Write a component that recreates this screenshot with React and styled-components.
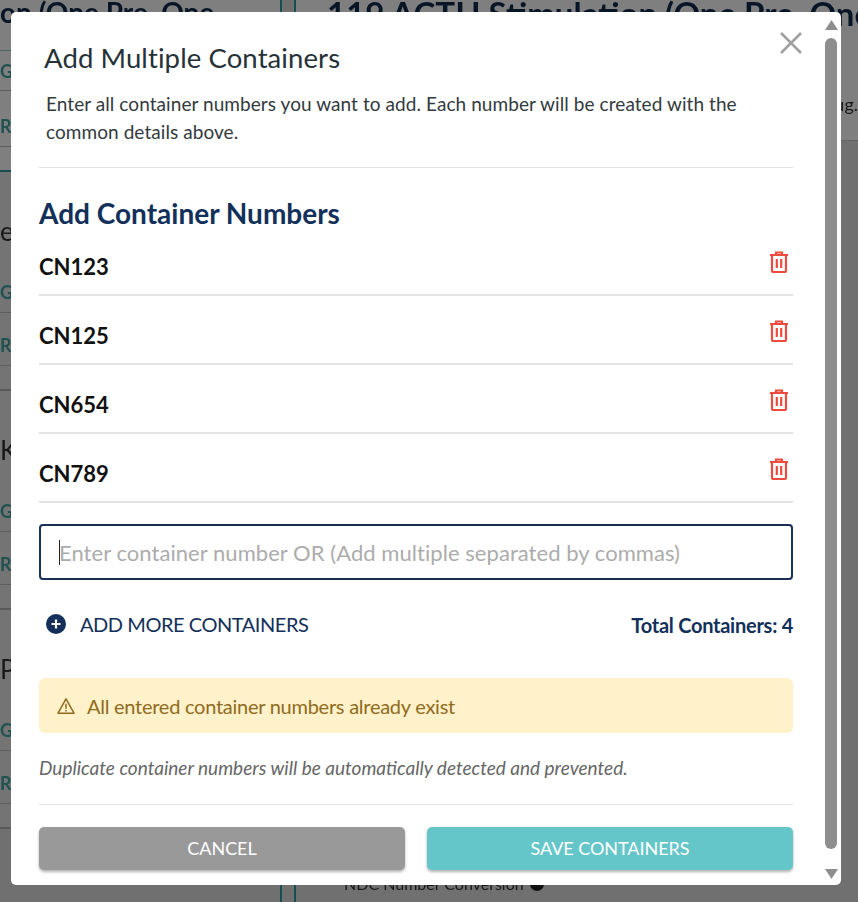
import styled, { createGlobalStyle } from "styled-components";

const containers = ["CN123", "CN125", "CN654", "CN789"];

const GlobalStyle = createGlobalStyle`
    html, body {
        margin: 0;
        padding: 0;
        background: #6f6f6f;
    }
    * {
        box-sizing: border-box;
    }
`;

const Page = styled.div`
    position: relative;
    width: 858px;
    height: 902px;
    overflow: hidden;
    font-family: Lato, "Open Sans", sans-serif;
`;

/* the page behind the dialog, only its edges show */
const Underlay = styled.div`
    position: absolute;
    inset: 0;
    display: flex;
    background: #e0e0e0;
    filter: blur(0.7px);
`;

const LeftColumn = styled.div`
    width: 282px;
    flex: none;
    display: flex;
    flex-direction: column;
    border-right: 2px solid #2f9c9c;
`;

const RightColumn = styled.div`
    flex: 1;
    min-width: 0;
    margin-left: 12px;
    display: flex;
    flex-direction: column;
    border-left: 2px solid #2f9c9c;
`;

const LeftHeading = styled.div`
    height: 50px;
    background: #fff;
    color: #0f2b4c;
    font-size: 28px;
    font-weight: 700;
    line-height: 24px;
    white-space: nowrap;
    overflow: hidden;
`;

const Section = styled.div`
    height: ${(p) => (p.$first ? "122px" : "219px")};
    flex: none;
    border-bottom: 2px solid ${(p) => (p.$first ? "#2f9c9c" : "#b5b5b5")};
    background: ${(p) => (p.$first ? "#fff" : "#e8e8e8")};
`;

const SectionLabel = styled.div`
    height: 100px;
    padding-top: 44px;
    font-size: 26px;
    line-height: 30px;
    color: #333;
`;

const LabelMark = styled.span`
    color: #2c4a86;
`;

const ChoiceRow = styled.div`
    height: 41px;
    margin-bottom: ${(p) => p.$gap}px;
    border-bottom: 1px solid #bcbcbc;
    border-top: ${(p) => (p.$top ? "1px solid #9ccaca" : "none")};
    color: #3fa5a0;
    font-size: 18px;
    font-weight: 700;
    line-height: 41px;
`;

const RightHeading = styled.div`
    height: 92px;
    padding-left: 31px;
    background: #fff;
    color: #0f2b4c;
    font-size: 33px;
    font-weight: 700;
    line-height: 26px;
    white-space: nowrap;
    overflow: hidden;
`;

const RightLine = styled.div`
    height: 49px;
    background: #fff;
    border-bottom: 1px solid #c8c8c8;
    color: #333;
    font-size: 18px;
    line-height: 24px;
    text-align: right;
`;

const RightFooter = styled.div`
    margin-top: auto;
    padding: 0 0 10px 48px;
    display: flex;
    align-items: center;
    gap: 6px;
    color: #333;
    font-size: 16px;
    line-height: 16px;
`;

const InfoDot = styled.span`
    width: 14px;
    height: 14px;
    border-radius: 50%;
    background: #222;
`;

const Backdrop = styled.div`
    position: absolute;
    inset: 0;
    padding: 12px 17px 17px 11px;
    background: rgba(0, 0, 0, 0.5);
`;

const Modal = styled.div`
    position: relative;
    width: 830px;
    height: 873px;
    display: flex;
    background: #fff;
    border-radius: 5px;
    overflow: hidden;
`;

const Content = styled.div`
    flex: 1;
    min-width: 0;
    padding: 0 32px 0 28px;
    display: flex;
    flex-direction: column;
`;

const CloseButton = styled.button`
    position: absolute;
    top: 20px;
    left: 768px;
    width: 24px;
    height: 22px;
    padding: 0;
    border: none;
    background: none;
    display: block;
`;

const Title = styled.h2`
    margin: 30px 0 0 5px;
    color: #263238;
    font-size: 27.5px;
    font-weight: 400;
    line-height: 32px;
    letter-spacing: 0.1px;
`;

const Description = styled.p`
    margin: 16px 0 0 7px;
    color: #333a40;
    font-size: 19px;
    font-weight: 400;
    line-height: 28px;
    letter-spacing: 0.07px;
`;

const Divider = styled.hr`
    width: 100%;
    margin: ${(p) => p.$top}px 0 0;
    border: none;
    border-top: 1px solid #e2e2e2;
    flex: none;
`;

const SectionTitle = styled.h3`
    margin: 29px 0 0;
    color: #12305a;
    font-size: 28px;
    font-weight: 700;
    line-height: 32px;
`;

const ContainerRow = styled.div`
    height: 69px;
    flex: none;
    display: flex;
    align-items: center;
    justify-content: space-between;
    border-bottom: 2px solid #e4e4e4;
`;

const FirstRows = styled.div`
    margin-top: -2px;
`;

const ContainerName = styled.span`
    color: #111;
    font-size: 22px;
    font-weight: 700;
    padding-top: 12px;
`;

const DeleteButton = styled.button`
    width: 20px;
    height: 22px;
    margin: 0 4px -2px 0;
    padding: 0;
    border: none;
    background: none;
    display: block;
`;

const InputWrap = styled.div`
    position: relative;
    margin-top: 21px;
    height: 56px;
    flex: none;
`;

const NumberInput = styled.input`
    width: 100%;
    height: 100%;
    padding: 0 18px;
    border: 2px solid #1b2f55;
    border-radius: 4px;
    outline: none;
    font-family: inherit;
    font-size: 22px;
    letter-spacing: 0.05px;
    &::placeholder {
        color: #acacac;
        opacity: 1;
    }
`;

const Caret = styled.span`
    position: absolute;
    left: 20px;
    top: 16px;
    width: 1px;
    height: 25px;
    background: #222;
`;

const AddRow = styled.div`
    margin-top: 27px;
    height: 34px;
    flex: none;
    display: flex;
    align-items: center;
    justify-content: space-between;
`;

const AddButton = styled.button`
    display: flex;
    align-items: center;
    gap: 14px;
    margin-left: 7px;
    padding: 0;
    border: none;
    background: none;
    color: #12305a;
    font-family: inherit;
    font-size: 20px;
    letter-spacing: -0.45px;
`;

const Total = styled.span`
    padding-top: 2px;
    color: #12305a;
    font-size: 20px;
    font-weight: 700;
    letter-spacing: -0.25px;
`;

const Alert = styled.div`
    margin-top: 37px;
    height: 55px;
    flex: none;
    padding-left: 18px;
    display: flex;
    align-items: center;
    gap: 12px;
    background: #fff1c9;
    border-radius: 6px;
    color: #8f6b1e;
    font-size: 20px;
    letter-spacing: -0.26px;
`;

const Note = styled.p`
    margin: 23px 0 0;
    color: #666;
    font-size: 19px;
    font-style: italic;
    line-height: 24px;
    letter-spacing: 0;
`;

const Actions = styled.div`
    margin-top: 22px;
    display: flex;
    gap: 22px;
`;

const ActionButton = styled.button`
    flex: 1;
    height: 43px;
    padding: 0 0 2px;
    border: none;
    border-radius: 5px;
    background: ${(p) => (p.$primary ? "#65c6c9" : "#999999")};
    box-shadow: 0 2px 3px rgba(0, 0, 0, 0.3);
    color: #fff;
    font-family: inherit;
    font-size: 18px;
    letter-spacing: -0.05px;
`;

const ScrollRail = styled.div`
    width: 12px;
    flex: none;
    margin-right: 4px;
    padding-top: 8px;
    display: flex;
    flex-direction: column;
    align-items: center;
`;

const ScrollThumb = styled.div`
    width: 12px;
    height: 811px;
    margin: 8px 0 20px;
    border-radius: 6px;
    background: #8e8e8e;
`;

const ArrowIcon = styled.svg`
    display: block;
    flex: none;
`;

const TrashIcon = () => (
    <svg width="20" height="22" viewBox="0 0 20 22" fill="none" stroke="#ee4b3e" strokeWidth="2.2">
        <path d="M1 4h18M7 4V1.5h6V4" />
        <path d="M3 4.5v15.2a1.3 1.3 0 0 0 1.3 1.3h11.4a1.3 1.3 0 0 0 1.3-1.3V4.5" />
        <path d="M7.8 8v9M12.2 8v9" />
    </svg>
);

const PlusIcon = () => (
    <svg width="20" height="20" viewBox="0 0 20 20">
        <circle cx="10" cy="10" r="10" fill="#12305a" />
        <path d="M10 5.5v9M5.5 10h9" stroke="#fff" strokeWidth="2.2" />
    </svg>
);

const WarningIcon = () => (
    <svg width="18" height="18" viewBox="0 0 18 18" fill="none" stroke="#8f6b1e" strokeWidth="1.5">
        <path d="M9 1.8 17 16.2H1Z" strokeLinejoin="round" />
        <path d="M9 6.8v5M9 13v1.6" />
    </svg>
);

const App = () => {
    return (
        <Page>
            <GlobalStyle />
            <Underlay>
                <LeftColumn>
                    <LeftHeading>on (One Pre, One</LeftHeading>
                    <Section $first>
                        <ChoiceRow $gap={15} $top>G</ChoiceRow>
                        <ChoiceRow $gap={0}>R</ChoiceRow>
                    </Section>
                    <Section>
                        <SectionLabel>e<LabelMark>|</LabelMark></SectionLabel>
                        <ChoiceRow $gap={12}>G</ChoiceRow>
                        <ChoiceRow $gap={0}>R</ChoiceRow>
                    </Section>
                    <Section>
                        <SectionLabel>K</SectionLabel>
                        <ChoiceRow $gap={12}>G</ChoiceRow>
                        <ChoiceRow $gap={0}>R</ChoiceRow>
                    </Section>
                    <Section>
                        <SectionLabel>P<LabelMark>(</LabelMark></SectionLabel>
                        <ChoiceRow $gap={12}>G</ChoiceRow>
                        <ChoiceRow $gap={0}>R</ChoiceRow>
                    </Section>
                </LeftColumn>
                <RightColumn>
                    <RightHeading>119 ACTH Stimulation (One Pre, One</RightHeading>
                    <RightLine>ug.</RightLine>
                    <RightFooter>NDC Number Conversion <InfoDot /></RightFooter>
                </RightColumn>
            </Underlay>
            <Backdrop>
                <Modal>
                    <Content>
                        <Title>Add Multiple Containers</Title>
                        <Description>
                            Enter all container numbers you want to add. Each number will be created with the common details above.
                        </Description>
                        <Divider $top={21} />
                        <SectionTitle>Add Container Numbers</SectionTitle>
                        <FirstRows>
                            {containers.map((name) => (
                                <ContainerRow key={name}>
                                    <ContainerName>{name}</ContainerName>
                                    <DeleteButton aria-label={`Delete ${name}`}>
                                        <TrashIcon />
                                    </DeleteButton>
                                </ContainerRow>
                            ))}
                        </FirstRows>
                        <InputWrap>
                            <NumberInput placeholder="Enter container number OR (Add multiple separated by commas)" />
                            <Caret />
                        </InputWrap>
                        <AddRow>
                            <AddButton>
                                <PlusIcon />
                                ADD MORE CONTAINERS
                            </AddButton>
                            <Total>Total Containers: 4</Total>
                        </AddRow>
                        <Alert>
                            <WarningIcon />
                            All entered container numbers already exist
                        </Alert>
                        <Note>Duplicate container numbers will be automatically detected and prevented.</Note>
                        <Divider $top={24} />
                        <Actions>
                            <ActionButton>CANCEL</ActionButton>
                            <ActionButton $primary>SAVE CONTAINERS</ActionButton>
                        </Actions>
                    </Content>
                    <ScrollRail>
                        <ArrowIcon width="13" height="10" viewBox="0 0 13 10">
                            <path d="M6.5 0 13 10H0Z" fill="#8e8e8e" />
                        </ArrowIcon>
                        <ScrollThumb />
                        <ArrowIcon width="13" height="10" viewBox="0 0 13 10">
                            <path d="M0 0H13L6.5 10Z" fill="#8e8e8e" />
                        </ArrowIcon>
                    </ScrollRail>
                    <CloseButton aria-label="Close">
                        <svg width="24" height="22" viewBox="0 0 24 22" fill="none" stroke="#a0a0a0" strokeWidth="2.6">
                            <path d="M2 1l20 20M22 1 2 21" />
                        </svg>
                    </CloseButton>
                </Modal>
            </Backdrop>
        </Page>
    );
};

export default App;
